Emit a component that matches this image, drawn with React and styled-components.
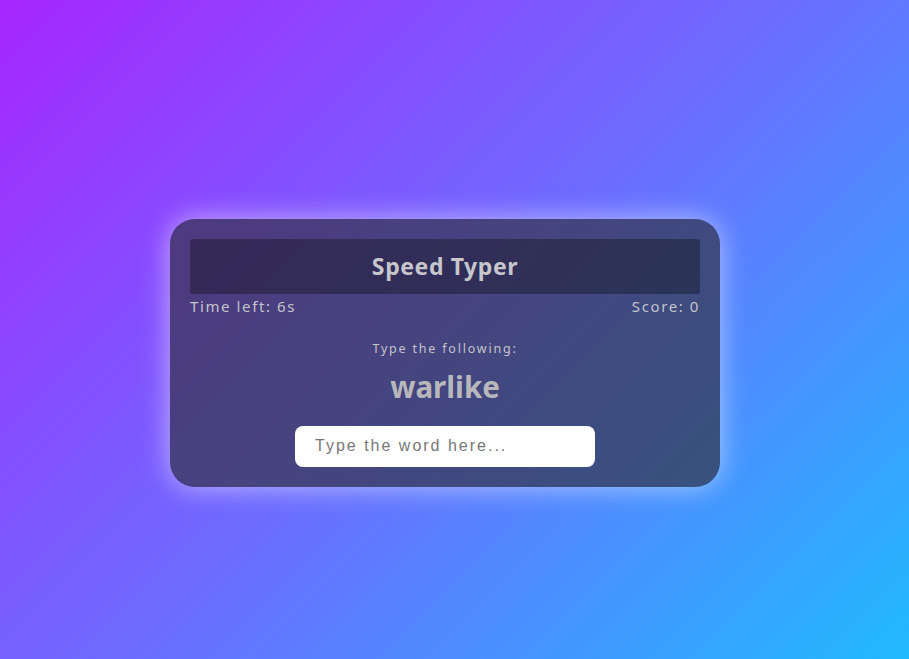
import React from "react";
import styled, { createGlobalStyle } from "styled-components";

const Global = createGlobalStyle`
  html, body { margin: 0; padding: 0; }
  body {
    font-family: "Noto Sans", "Open Sans", sans-serif;
    background: linear-gradient(135deg, #a626ff 0%, #6c6cff 50%, #20baff 100%);
    min-height: 100vh;
  }
`;

const Page = styled.main`
  min-height: 100vh;
  display: flex;
  align-items: center;
  justify-content: center;
  padding: 46px 19px 0 0;
  box-sizing: border-box;
`;

const Card = styled.section`
  width: 550px;
  box-sizing: border-box;
  padding: 20px 20px 20px;
  border-radius: 25px;
  background: rgba(50, 50, 66, 0.68);
  box-shadow: 0 0 28px rgba(255, 255, 255, 0.55);
  display: flex;
  flex-direction: column;
  align-items: center;
  color: #c8c8c8;
`;

const Header = styled.header`
  width: 100%;
  height: 55px;
  display: flex;
  align-items: center;
  justify-content: center;
  background: rgba(0, 0, 0, 0.3);
  border-radius: 3px;
`;

const Title = styled.h1`
  margin: 0;
  font-size: 23px;
  font-weight: 700;
  color: #c6c6cc;
  letter-spacing: 0.6px;
`;

const Stats = styled.div`
  width: 100%;
  display: flex;
  justify-content: space-between;
  margin-top: 2px;
  font-size: 15px;
  letter-spacing: 1.6px;
  line-height: 20px;
  color: #c4c4cc;
`;

const Prompt = styled.p`
  margin: 24px 0 0;
  font-size: 12.5px;
  letter-spacing: 1.8px;
  line-height: 18px;
  color: #c4c4cc;
`;

const Word = styled.h2`
  margin: 9px 0 0;
  font-size: 29.5px;
  font-weight: 700;
  line-height: 40px;
  color: #b8b8bc;
`;

const Input = styled.input`
  margin-top: 19px;
  width: 300px;
  height: 41px;
  box-sizing: border-box;
  border: none;
  outline: none;
  border-radius: 8px;
  background: #fff;
  padding: 0 20px;
  font-family: "Liberation Sans", Arial, sans-serif;
  font-size: 16px;
  letter-spacing: 2px;
  color: #333;
  &::placeholder { color: #777; }
`;

export default function App() {
  return (
    <>
      <Global />
      <Page>
        <Card>
          <Header>
            <Title>Speed Typer</Title>
          </Header>
          <Stats>
            <span>Time left: 6s</span>
            <span>Score: 0</span>
          </Stats>
          <Prompt>Type the following:</Prompt>
          <Word>warlike</Word>
          <Input placeholder="Type the word here..." />
        </Card>
      </Page>
    </>
  );
}
